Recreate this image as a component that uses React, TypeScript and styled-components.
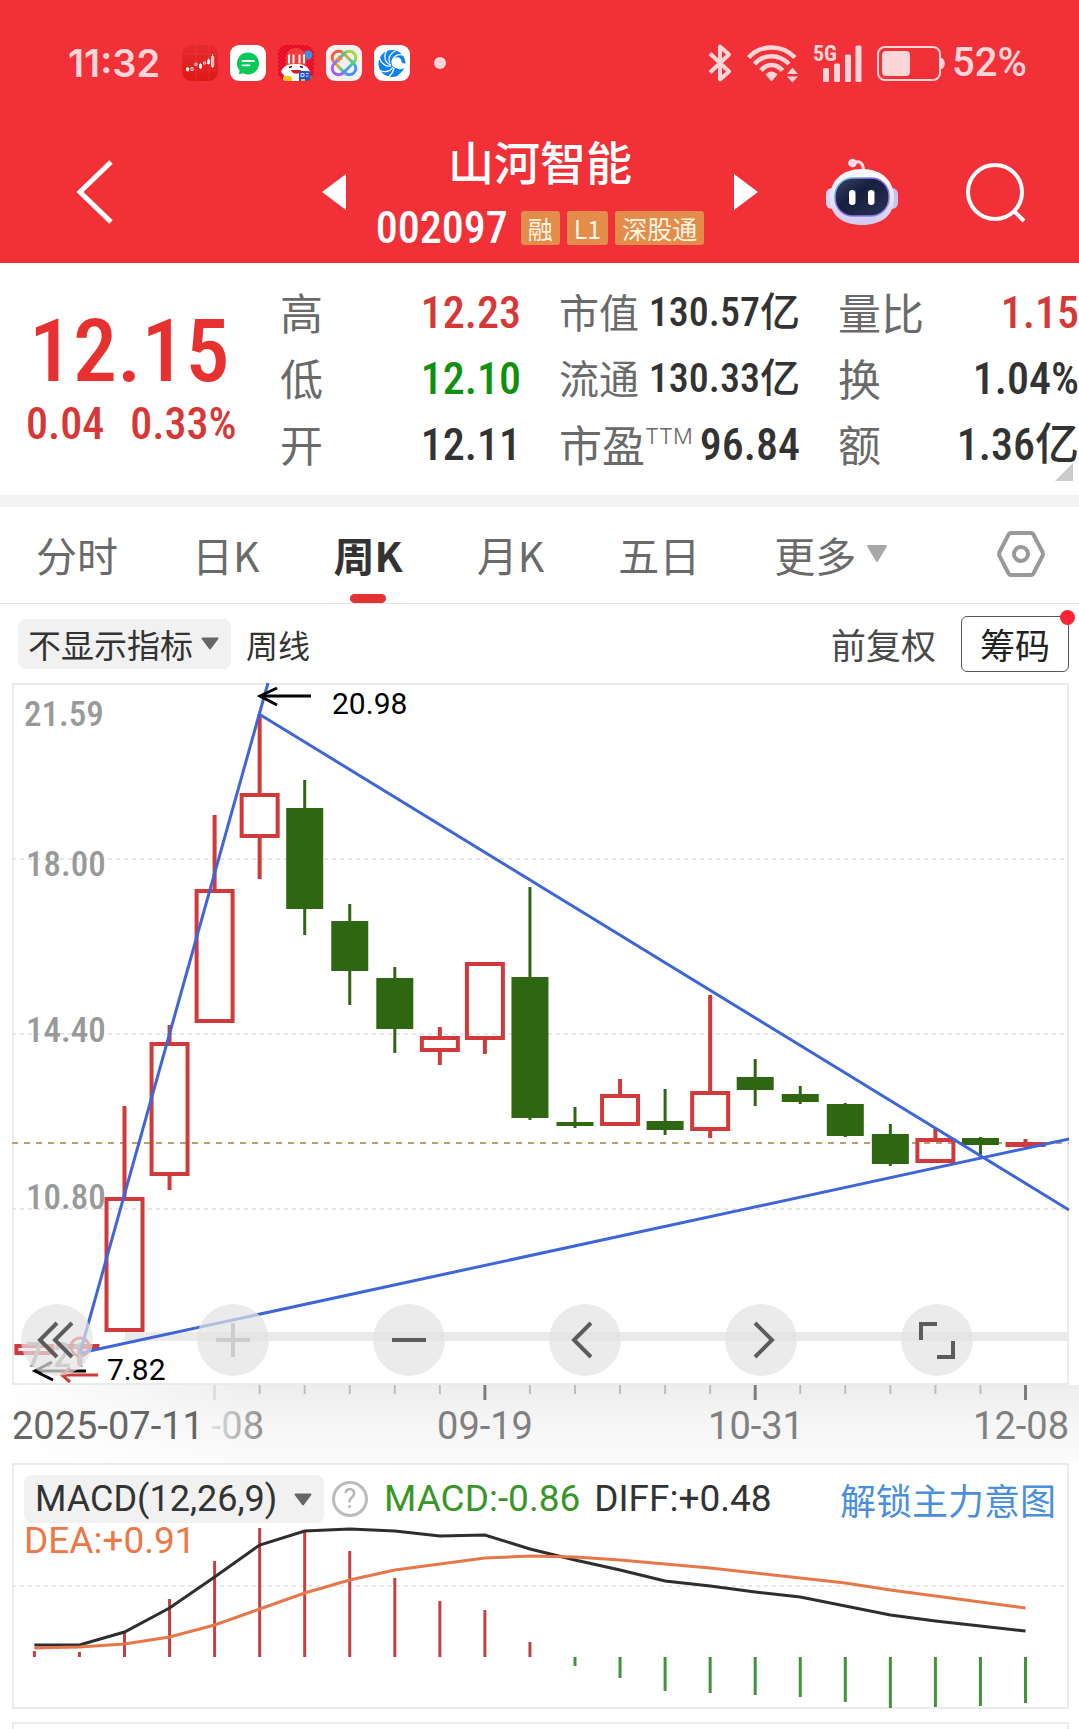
import React from "react";
import styled, { createGlobalStyle } from "styled-components";

const cjk = `"Noto Sans CJK SC", sans-serif`;
const condensed = `"Roboto Condensed", Roboto, ${cjk}`;
const latin = `Roboto, ${cjk}`;

const RED = "#d03a3a";
const GREEN = "#2f6612";
const BLUE = "#3f66d6";

const GlobalStyle = createGlobalStyle`
  * { box-sizing: border-box; }
  body { margin: 0; background: #fff; color: #333; font-family: ${cjk}; }
  button, select { font: inherit; color: inherit; border: 0; padding: 0; margin: 0; background: none; }
  svg { display: block; flex: none; overflow: visible; }
`;

const Page = styled.main`
  display: flex;
  flex-direction: column;
  overflow: hidden;
`;

/* ---------- status bar and title ---------- */

const Top = styled.header`
  background: #f13037;
  color: #fff;
`;

const StatusBar = styled.div`
  display: flex;
  align-items: center;
  justify-content: space-between;
  height: 126px;
  padding: 0 52px 0 68px;
  color: #ffd5d7;
`;

const StatusGroup = styled.div<{ $gap: number }>`
  display: flex;
  align-items: center;
  gap: ${(p) => p.$gap}px;
`;

const Clock = styled.time`
  font: 600 38px/40px Inter, sans-serif;
  margin-right: 10px;
`;

const Battery = styled.span`
  font: 500 40px/40px ${latin};
`;

const Dot = styled.span`
  width: 12px;
  height: 12px;
  margin-left: 12px;
  border-radius: 50%;
  background: currentColor;
`;

const TitleBar = styled.div`
  display: grid;
  grid-template-columns: 1fr auto 1fr;
  align-items: center;
  height: 137px;
  padding: 0 53px 6px 76px;
`;

const TitleCenter = styled.div`
  display: flex;
  align-items: center;
  gap: 30px;
  margin-right: 22px;
`;

const TitleBlock = styled.div`
  display: flex;
  flex-direction: column;
  align-items: center;
  gap: 20px;
`;

const StockName = styled.h1`
  margin: 0;
  font-size: 46px;
  font-weight: 500;
  line-height: 52px;
`;

const CodeRow = styled.div`
  display: flex;
  align-items: center;
  gap: 7px;
`;

const Code = styled.span`
  font: 500 44px/44px ${condensed};
  margin-right: 6px;
`;

const Tag = styled.span`
  height: 34px;
  padding: 0 7px;
  border-radius: 3px;
  background: #e48d4a;
  color: #fff6e2;
  font-size: 25px;
  line-height: 34px;
  white-space: nowrap;
`;

const IconButton = styled.button`
  display: flex;
  cursor: pointer;
`;

const TitleActions = styled.div`
  display: flex;
  align-items: center;
  justify-content: flex-end;
  gap: 68px;
`;

/* ---------- quote ---------- */

const Quote = styled.section`
  position: relative;
  display: grid;
  grid-template-columns: 240fr 799fr;
  column-gap: 14px;
  padding: 17px 0 17px 26px;
  border-bottom: 12px solid #f4f4f4;
`;

const PriceBlock = styled.div`
  display: flex;
  flex-direction: column;
  gap: 7px;
  padding-top: 27px;
  color: #e73131;
`;

const Price = styled.strong`
  padding-left: 3px;
  font: 500 88px/88px ${condensed};
`;

const Change = styled.div`
  display: flex;
  gap: 26px;
  color: #d63838;
  font: 500 44px/44px ${condensed};
`;

const Stats = styled.dl`
  display: grid;
  grid-template-columns: repeat(3, 1fr);
  grid-auto-rows: 66px;
  column-gap: 38px;
  margin: 0;
`;

const Stat = styled.div`
  display: flex;
  align-items: center;
  justify-content: space-between;
  white-space: nowrap;
`;

const StatLabel = styled.dt<{ $small?: boolean }>`
  display: flex;
  padding-bottom: 4px;
  color: #6a6a6a;
  font-size: ${(p) => (p.$small ? 40 : 43)}px;
  font-weight: 400;
  line-height: 44px;

  small {
    font: 300 22px/30px Inter, sans-serif;
  }
`;

const StatValue = styled.dd<{ $tone?: string; $small?: boolean }>`
  margin: 0;
  color: ${(p) => p.$tone ?? "#333"};
  font: 500 ${(p) => (p.$small ? 40 : 44)}px/44px ${condensed};
`;

const Corner = styled.svg`
  position: absolute;
  right: 6px;
  bottom: 14px;
`;

/* ---------- period tabs ---------- */

const Tabs = styled.nav`
  display: flex;
  align-items: stretch;
  gap: 74px;
  height: 97px;
  padding: 0 34px 2px 36px;
  border-bottom: 1px solid #e4e4e4;
`;

const Tab = styled.button<{ $active?: boolean }>`
  position: relative;
  display: flex;
  align-items: center;
  gap: 10px;
  color: ${(p) => (p.$active ? "#333" : "#6a6a6a")};
  font-size: 41px;
  font-weight: ${(p) => (p.$active ? 700 : 400)};
  line-height: 44px;
  white-space: nowrap;
  cursor: pointer;

  &::after {
    content: "";
    display: ${(p) => (p.$active ? "block" : "none")};
    position: absolute;
    left: calc(50% - 18px);
    bottom: -2px;
    width: 36px;
    height: 9px;
    border-radius: 5px;
    background: #e53232;
  }
`;

const SettingsButton = styled(IconButton)`
  align-items: center;
  margin-left: auto;
`;

/* ---------- chart toolbar ---------- */

const Toolbar = styled.div`
  display: flex;
  align-items: center;
  height: 79px;
  padding: 0 10px 0 18px;
`;

const Picker = styled.label<{ $height: number }>`
  position: relative;
  display: flex;
  align-items: center;
  height: ${(p) => p.$height}px;
  border-radius: 8px;
  background: #f1f1f1;

  svg {
    position: absolute;
    right: 12px;
    pointer-events: none;
  }
`;

const IndicatorSelect = styled.select`
  appearance: none;
  height: 100%;
  padding: 0 38px 0 10px;
  font-size: 33px;
  font-weight: 400;
`;

const MacdSelect = styled.select`
  appearance: none;
  height: 100%;
  padding: 0 46px 0 11px;
  font: 400 36px/44px ${latin};
`;

const PeriodName = styled.span`
  margin-left: 15px;
  font-size: 32px;
  line-height: 44px;
`;

const AdjustButton = styled.button`
  margin-left: auto;
  color: #4a4a4a;
  font-size: 35px;
  font-weight: 400;
  line-height: 44px;
  cursor: pointer;
`;

const ChipsButton = styled.button`
  position: relative;
  height: 56px;
  margin-left: 25px;
  padding: 0 18px;
  border: 1px solid #555;
  border-radius: 6px;
  color: #222;
  font-size: 35px;
  line-height: 44px;
  cursor: pointer;

  &::after {
    content: "";
    position: absolute;
    top: -7px;
    right: -7px;
    width: 15px;
    height: 15px;
    border-radius: 50%;
    background: #fd2436;
  }
`;

/* ---------- charts ---------- */

const Panel = styled.section`
  position: relative;
  margin: 0 10px 0 12px;
  border: 2px solid #ebebeb;
`;

const Plot = styled.svg`
  width: 100%;
  height: auto;
`;

const ScaleText = styled.text`
  fill: #999;
  font: 500 35px ${condensed};
`;

const MarkText = styled.text`
  fill: #000;
  font: 400 30px ${latin};
`;

const DateText = styled.text<{ $strong?: boolean }>`
  fill: ${(p) => (p.$strong ? "#666" : "#808080")};
  font: 400 38px ${latin};
`;

const FadedDateText = styled(DateText)`
  fill: url(#fadeDate);
`;

const Controls = styled.div`
  position: absolute;
  left: 7px;
  right: 94px;
  bottom: 7px;
  display: flex;
  justify-content: space-between;
`;

const RoundButton = styled.button`
  display: flex;
  align-items: center;
  justify-content: center;
  width: 72px;
  height: 72px;
  border-radius: 50%;
  background: rgba(227, 227, 227, 0.71);
  color: #5c5c5c;
  cursor: pointer;

  &:disabled {
    color: #ccc;
  }
`;

const Axis = styled.div`
  padding: 0 10px 0 12px;
  background: linear-gradient(90deg, #fff 0, rgba(255, 255, 255, 0) 24%),
    linear-gradient(#ededed 0, #f6f6f6 50%, #fbfbfb 100%);
`;

const MacdPanel = styled(Panel)`
  display: grid;

  > * {
    grid-area: 1 / 1;
  }
`;

const MacdHead = styled.div`
  z-index: 1;
  display: flex;
  flex-direction: column;
  padding: 10px 11px 0 10px;
  align-self: start;
`;

const MacdRow = styled.div`
  display: flex;
  align-items: center;
`;

const HelpButton = styled.button`
  width: 36px;
  height: 36px;
  margin: 0 16px 0 8px;
  border: 3px solid #bcbcbc;
  border-radius: 50%;
  color: #b4b4b4;
  font: 400 27px/30px ${latin};
  cursor: pointer;
`;

const Reading = styled.span<{ $tone: string }>`
  margin-right: 14px;
  color: ${(p) => p.$tone};
  font: 400 37px/36px ${latin};
`;

const UnlockLink = styled.a`
  margin-left: auto;
  color: #4a8fdc;
  font-size: 36px;
  line-height: 44px;
  text-decoration: none;
`;

const NextPanel = styled(Panel)`
  height: 7px;
  margin-top: 13px;
  border-bottom: 0;
`;

/* ---------- data ---------- */

const STEP = 45.05;
const xAt = (i: number) => 22.4 + STEP * i;

type Candle = { up: boolean; top: number; bottom: number; high: number; low: number };
const c = (up: boolean, high: number, top: number, bottom: number, low: number): Candle => ({ up, top, bottom, high, low });

const candles: Candle[] = [
  c(true, 661, 661, 672, 672),
  c(true, 661, 661, 665, 682),
  c(true, 423, 514, 649, 649),
  c(true, 342, 359, 493, 507),
  c(true, 132, 206, 340, 340),
  c(true, 31, 110, 155, 196),
  c(false, 97, 125, 226, 252),
  c(false, 221, 238, 288, 322),
  c(false, 284, 295, 346, 370),
  c(true, 344, 353, 369, 382),
  c(true, 279, 279, 357, 371),
  c(false, 204, 294, 435, 437),
  c(false, 424, 439, 443, 445),
  c(true, 396, 411, 443, 443),
  c(false, 406, 438, 447, 452),
  c(true, 312, 408, 448, 455),
  c(false, 376, 394, 407, 423),
  c(false, 403, 411, 419, 421),
  c(false, 420, 421, 453, 454),
  c(false, 441, 451, 481, 483),
  c(true, 446, 455, 480, 480),
  c(false, 454, 455, 462, 473),
  c(true, 456, 459, 463, 463),
];

const bars = [-6, -5, -24, -58, -96, -129, -125, -106, -79, -56, -47, -15, 9, 21, 34, 36, 38, 40, 45, 51, 50, 49, 46];
const diff = [182, 182, 169, 145, 114, 82, 68, 66, 68, 73, 72, 86, 97, 107, 118, 123, 129, 134, 143, 152, 158, 163, 168];
const dea = [185, 184, 181, 174, 162, 146, 130, 117, 107, 101, 95, 93, 94, 97, 101, 105, 110, 115, 120, 127, 133, 139, 145];

const points = (values: number[]) => values.map((y, i) => `${xAt(i)},${y}`).join(" ");

const stats = [
  { label: "高", value: "12.23", tone: "#d63838" },
  { label: "市值", value: "130.57亿", small: true },
  { label: "量比", value: "1.15", tone: "#d63838" },
  { label: "低", value: "12.10", tone: "#0f910f" },
  { label: "流通", value: "130.33亿", small: true },
  { label: "换", value: "1.04%" },
  { label: "开", value: "12.11" },
  { label: "市盈", note: "TTM", value: "96.84" },
  { label: "额", value: "1.36亿" },
];

/* ---------- drawings ---------- */

const CandleAppIcon = () => (
  <svg width="36" height="36" viewBox="0 0 36 36">
    <defs>
      <linearGradient id="appRed" x1="0" y1="0" x2="0" y2="1">
        <stop offset="0" stopColor="#e62a31" />
        <stop offset="1" stopColor="#de1815" />
      </linearGradient>
    </defs>
    <rect width="36" height="36" rx="9" fill="url(#appRed)" />
    <path d="M14 0v36M27 0v36M0 9h36M0 25h36" stroke="#f0555a" strokeWidth=".5" opacity=".6" />
    <g stroke="#fff" strokeWidth=".8">
      <path d="M4.500 23h2.200v2.600H4.500zM5.600 22v4.500M17.500 19.500h2v3.500h-2zM18.500 18v6M25.500 15h2v3.500h-2zM26.500 13.500v6" fill="#fff" />
      <path d="M9 22.500h2v3H9zM13 18h2v2.500h-2zM21.500 17h2v2h-2zM29.500 11.500h2.200v10h-2.200zM30.600 9v14" fill="none" />
    </g>
  </svg>
);

const ChatAppIcon = () => (
  <svg width="36" height="36" viewBox="0 0 36 36">
    <rect width="36" height="36" rx="9" fill="#fff" />
    <path d="M18 7.500a11 11 0 1 1-5 20.800c-1.500.7-3 .9-4.500.7.800-1 1.200-2 1.100-3.300A11 11 0 0 1 18 7.500z" fill="#07c957" />
    <path d="M12.500 16h11.500M12.500 20.300h7" stroke="#fff" strokeWidth="1.800" strokeLinecap="round" />
  </svg>
);

const FestivalAppIcon = () => (
  <svg width="36" height="36" viewBox="0 0 36 36">
    <defs>
      <clipPath id="festClip"><rect width="36" height="36" rx="9" /></clipPath>
      <pattern id="festGrid" width="4" height="4" patternUnits="userSpaceOnUse">
        <path d="M0 0h2v2H0zM2 2h2v2H2z" fill="#d5122c" />
      </pattern>
    </defs>
    <g clipPath="url(#festClip)">
      <rect width="36" height="36" fill="#fb1228" />
      <rect width="36" height="36" fill="url(#festGrid)" />
      <circle cx="30" cy="10" r="4.500" fill="#3f8ee0" />
      <path d="M8 20C6 9 11 3 18 3s12 6 10 17z" fill="#f23c3a" />
      <path d="M11 9.500v9M15.500 9.500v9M21.500 9.500v9M26 9.500v9" stroke="#fff" strokeWidth="2" />
      <path d="M3 27c3-8 9-8 15-8s12 1 14 8l-5 2v7H6v-6z" fill="#fff" />
      <path d="M11 22.500l3-1M25 22.500l-3-1" stroke="#222" strokeWidth="1.500" />
      <path d="M13 25h10c0 5-9 5-10 0z" fill="#c22" />
      <rect x="5" y="31" width="9" height="6" rx="2" fill="#f9c514" />
      <rect x="21" y="26" width="11" height="11" rx="1.500" fill="#1d56cf" />
      <path d="M23 28.500h3v3h-3zM28 28.500h2.500M28 31h2.500" stroke="#cfe0ff" fill="none" />
      <rect x="23" y="34" width="4" height="3" fill="#f7b733" />
      <circle cx="34" cy="33" r="2" fill="#44b449" />
    </g>
  </svg>
);

const OrbitAppIcon = () => (
  <svg width="36" height="36" viewBox="0 0 36 36">
    <defs>
      <linearGradient id="orbit" gradientUnits="userSpaceOnUse" x1="6" y1="18" x2="30" y2="18">
        <stop offset="0" stopColor="#ff5a3c" />
        <stop offset=".35" stopColor="#f3a536" />
        <stop offset=".7" stopColor="#3fcf9a" />
        <stop offset="1" stopColor="#4a90ff" />
      </linearGradient>
      <linearGradient id="orbitBack" gradientUnits="userSpaceOnUse" x1="6" y1="18" x2="30" y2="18">
        <stop offset="0" stopColor="#a85bf0" />
        <stop offset=".45" stopColor="#4ca0f4" />
        <stop offset=".8" stopColor="#4fd070" />
        <stop offset="1" stopColor="#a8d83c" />
      </linearGradient>
    </defs>
    <rect width="36" height="36" rx="9" fill="#f2f2f3" />
    <g fill="none" strokeWidth="3">
      <rect x="4" y="11.500" width="28" height="13" rx="6.500" transform="rotate(45 18 18)" stroke="url(#orbit)" />
      <rect x="4" y="11.500" width="28" height="13" rx="6.500" transform="rotate(-45 18 18)" stroke="url(#orbitBack)" />
    </g>
    <path d="M13 9.500l1.200 3.300L17.500 14l-3.300 1.200L13 18.500l-1.200-3.300L8.500 14l3.300-1.200z" fill="#f6813a" />
  </svg>
);

const SwirlAppIcon = () => (
  <svg width="36" height="36" viewBox="0 0 36 36">
    <rect width="36" height="36" rx="9" fill="#fff" />
    <circle cx="18" cy="18.500" r="13.500" fill="#0e82f4" />
    <path d="M20 13c4-2 8 0 7.500 4.500L32 19l-1 7-8 6c4-4 3-8-1-9-5-1-6-7-2-10z" fill="#fff" />
    <path d="M20.500 22.500c3 2.500 7 2 10 .5-2 4-6 7-10 8 1.500-2 1.500-5 0-8.500z" fill="#0e82f4" />
    <g fill="none" stroke="#fff" strokeWidth="1.300">
      <path d="M18 17C19 10.500 25 8 31 11" />
      <path d="M16 18C13 13 17 7 24 5" />
      <path d="M17 20C11 18 9 12 13 5" />
      <path d="M17 21C11 22 7 18 5 12" />
      <path d="M19 22C16 27 10 28 5 25" />
      <path d="M20 23C19 28 17 30 14 32" />
    </g>
  </svg>
);

const Bluetooth = () => (
  <svg width="24" height="38" viewBox="0 0 24 38">
    <path d="M2 9.500L21 27.500 12 35.500V2.500l9 8L2 28.500" fill="none" stroke="#ffd5d7" strokeWidth="4" strokeLinejoin="round" />
  </svg>
);

const Wifi = () => (
  <svg width="51" height="37" viewBox="0 0 51 37">
    <g fill="none" stroke="#ffd5d7" strokeWidth="4.500">
      <path d="M1.500 12.500C14-1 35-1 48 12.500" />
      <path d="M7.500 19C17 8.500 32 8.500 42 19" />
      <path d="M14 25.500c6-7.500 15-7.500 21.500 0" />
    </g>
    <path d="M18.500 29.500c4-4 8-4 12 0l-6 7z" fill="#ffd5d7" />
    <path d="M40 29l5.500-6.500L51 29zM40 31.500l5.500 6L51 31.500z" fill="#ffd5d7" />
  </svg>
);

const NetLabel = styled.text`
  fill: #ffd5d7;
  font: 700 22px ${condensed};
`;

const Signal = () => (
  <svg width="49" height="37" viewBox="0 0 49 37">
    <NetLabel x="0" y="16">5G</NetLabel>
    <g fill="#ffd5d7">
      <rect x="10" y="23" width="6" height="14" rx="1.500" />
      <rect x="21" y="18.500" width="6" height="18.500" rx="1.500" />
      <rect x="32" y="9.500" width="6" height="27.500" rx="1.500" />
      <rect x="42.500" y="0.500" width="6" height="36.500" rx="1.500" />
    </g>
  </svg>
);

const BatteryIcon = () => (
  <svg width="68" height="35" viewBox="0 0 68 35">
    <rect x="1" y="1" width="62" height="33" rx="7" fill="none" stroke="#ffd5d7" strokeWidth="2" />
    <rect x="5" y="5" width="28" height="25" rx="4" fill="#ffd5d7" />
    <path d="M64 12c5 0 5 11 0 11z" fill="#ffd5d7" />
  </svg>
);

const Robot = () => (
  <svg width="72" height="68" viewBox="0 0 72 68">
    <defs>
      <linearGradient id="shell" x1="0" y1="0" x2="0" y2="1">
        <stop offset="0" stopColor="#fff" />
        <stop offset=".6" stopColor="#e3e0f8" />
        <stop offset="1" stopColor="#cfc9ef" />
      </linearGradient>
      <linearGradient id="visor" x1="0" y1="0" x2="1" y2="1">
        <stop offset="0" stopColor="#3a4668" />
        <stop offset=".4" stopColor="#161f3f" />
        <stop offset="1" stopColor="#2b3152" />
      </linearGradient>
      <linearGradient id="rim" x1="0" y1="0" x2="1" y2="1">
        <stop offset="0" stopColor="#78cdf4" />
        <stop offset=".5" stopColor="#8b5be8" />
        <stop offset="1" stopColor="#7c9cf0" />
      </linearGradient>
    </defs>
    <path d="M27 5c7-3 10 0 10.500 7" fill="none" stroke="#ffd9e2" strokeWidth="3" />
    <circle cx="26.500" cy="5" r="4.300" fill="#fbdfe8" />
    <rect x="0" y="30" width="12" height="21" rx="6" fill="#d9d6f4" />
    <rect x="60" y="30" width="12" height="21" rx="6" fill="#c6c4ee" />
    <path d="M36 11c20 0 32 12 32 29 0 18-13 27-32 27S4 58 4 40c0-17 12-29 32-29z" fill="url(#shell)" />
    <rect x="9" y="20" width="54" height="38" rx="18" fill="url(#visor)" stroke="url(#rim)" strokeWidth="1.500" />
    <rect x="23" y="32" width="6.500" height="15" rx="3.200" fill="#fff" />
    <rect x="42" y="32" width="6.500" height="15" rx="3.200" fill="#fff" />
  </svg>
);

const LargeDown = () => (
  <svg width="22" height="20" viewBox="0 0 22 20">
    <path d="M2 2h18l-9 15z" fill="#a8a8a8" stroke="#a8a8a8" strokeWidth="2" strokeLinejoin="round" />
  </svg>
);

const SmallDown = () => (
  <svg width="18" height="13" viewBox="0 0 18 13">
    <path d="M1.500 1.500h15L9 11.500z" fill="#666" stroke="#666" strokeWidth="2" strokeLinejoin="round" />
  </svg>
);

const glyph = { fill: "none", stroke: "currentColor", strokeWidth: 4 };

const RewindGlyph = () => (
  <svg width="36" height="38" viewBox="0 0 36 38"><path d="M18 2L1 19l17 17M33 2L16 19l17 17" {...glyph} /></svg>
);
const PlusGlyph = () => (
  <svg width="34" height="34" viewBox="0 0 34 34"><path d="M0 17h34M17 0v34" {...glyph} /></svg>
);
const MinusGlyph = () => (
  <svg width="34" height="34" viewBox="0 0 34 34"><path d="M0 17h34" {...glyph} /></svg>
);
const LeftGlyph = () => (
  <svg width="28" height="38" viewBox="0 0 28 38"><path d="M20 2L3 19l17 17" {...glyph} /></svg>
);
const RightGlyph = () => (
  <svg width="28" height="38" viewBox="0 0 28 38"><path d="M8 2l17 17L8 36" {...glyph} /></svg>
);
const ExpandGlyph = () => (
  <svg width="38" height="38" viewBox="0 0 38 38"><path d="M3 19V3h16M35 20v16H19" {...glyph} /></svg>
);

/* ---------- chart pieces ---------- */

const CandleMark = ({ x, d }: { x: number; d: Candle }) => {
  const color = d.up ? RED : GREEN;
  return (
    <g stroke={color} strokeWidth={d.up ? 4 : 3}>
      {d.high < d.top && <path d={`M${x} ${d.high}V${d.top}`} />}
      {d.low > d.bottom && <path d={`M${x} ${d.bottom}V${d.low}`} />}
      {d.up ? (
        <rect x={x - 18} y={d.top + 2} width="36" height={Math.max(1, d.bottom - d.top - 4)} fill="none" />
      ) : (
        <rect x={x - 18.5} y={d.top} width="37" height={d.bottom - d.top} fill={color} stroke="none" />
      )}
    </g>
  );
};

const PriceChart = () => (
  <Plot viewBox="2 2 1053 698" role="img" aria-label="周K">
    {[176, 351, 526].map((y) => (
      <path key={y} d={`M0 ${y}H1057`} stroke="#dedede" strokeWidth="1.500" strokeDasharray="4 4" />
    ))}
    <path d="M0 460H1057" stroke="#bf9f72" strokeWidth="2" strokeDasharray="6 6" />
    <ScaleText x="12" y="43">21.59</ScaleText>
    <ScaleText x="14" y="193">18.00</ScaleText>
    <ScaleText x="14" y="359">14.40</ScaleText>
    <ScaleText x="14" y="526">10.80</ScaleText>
    <rect x="113" y="649" width="944" height="9" fill="#ebebeb" />
    {candles.map((d, i) => (
      <CandleMark key={i} x={xAt(i)} d={d} />
    ))}
    <circle cx="68" cy="664" r="9" fill="none" stroke={RED} strokeWidth="3" />
    <ScaleText x="14" y="684">7.21</ScaleText>
    <g stroke={BLUE} strokeWidth="3" fill="none">
      <path d="M68 670L256 0" />
      <path d="M247 31L1057 527" />
      <path d="M68 670L1057 456" />
    </g>
    <g fill="none" strokeWidth="3">
      <path d="M299 13H248M265 5L248 13l17 9" stroke="#000" />
      <path d="M74 688H23M40 679L23 688l18 9" stroke="#000" />
      <path d="M86 692H50M58 685L50 692l8 7" stroke={RED} />
    </g>
    <MarkText x="320" y="31">20.98</MarkText>
    <MarkText x="95" y="697">7.82</MarkText>
  </Plot>
);

const DateAxis = () => (
  <Plot viewBox="0 0 1057 78" role="img" aria-label="日期">
    <defs>
      <linearGradient id="fadeDate" x1="0" x2="1">
        <stop offset="0" stopColor="#e4e4e4" />
        <stop offset="1" stopColor="#8c8c8c" />
      </linearGradient>
    </defs>
    {candles.map((_, i) => {
      if (i < 4) return null;
      const major = (i - 4) % 6 === 0;
      return (
        <path
          key={i}
          d={`M${xAt(i)} 0V${major ? 15 : 9}`}
          stroke={i === 4 ? "#ddd" : major ? "#7d7d7d" : "#bdbdbd"}
          strokeWidth={major ? 3 : 2}
        />
      );
    })}
    <DateText x="0" y="54" $strong>2025-07-11</DateText>
    <FadedDateText x="252" y="54" textAnchor="end">-08</FadedDateText>
    <DateText x="473" y="54" textAnchor="middle">09-19</DateText>
    <DateText x="744" y="54" textAnchor="middle">10-31</DateText>
    <DateText x="1057" y="54" textAnchor="end">12-08</DateText>
  </Plot>
);

const MacdChart = () => (
  <Plot viewBox="2 2 1053 242" role="img" aria-label="MACD">
    <path d="M0 123H1057" stroke="#e8e8e8" strokeWidth="2" strokeDasharray="4 4" />
    {bars.map((h, i) => (
      <path key={i} d={`M${xAt(i)} 194v${h}`} stroke={h < 0 ? "#c54141" : "#43933a"} strokeWidth="3" />
    ))}
    <polyline points={points(diff)} fill="none" stroke="#2e2e2e" strokeWidth="3" />
    <polyline points={points(dea)} fill="none" stroke="#e67749" strokeWidth="3" />
  </Plot>
);

export default function App() {
  return (
    <Page>
      <GlobalStyle />
      <Top>
        <StatusBar>
          <StatusGroup $gap={12}>
            <Clock>11:32</Clock>
            <CandleAppIcon />
            <ChatAppIcon />
            <FestivalAppIcon />
            <OrbitAppIcon />
            <SwirlAppIcon />
            <Dot />
          </StatusGroup>
          <StatusGroup $gap={15}>
            <Bluetooth />
            <Wifi />
            <Signal />
            <StatusGroup $gap={7}>
              <BatteryIcon />
              <Battery>52%</Battery>
            </StatusGroup>
          </StatusGroup>
        </StatusBar>
        <TitleBar>
          <IconButton aria-label="返回">
            <svg width="38" height="64" viewBox="0 0 38 64">
              <path d="M35 2L4 32l31 30" fill="none" stroke="#fff" strokeWidth="5" />
            </svg>
          </IconButton>
          <TitleCenter>
            <IconButton aria-label="上一只">
              <svg width="24" height="36" viewBox="0 0 24 36"><path d="M24 0v36L0 18z" fill="#fff" /></svg>
            </IconButton>
            <TitleBlock>
              <StockName>山河智能</StockName>
              <CodeRow>
                <Code>002097</Code>
                <Tag>融</Tag>
                <Tag>L1</Tag>
                <Tag>深股通</Tag>
              </CodeRow>
            </TitleBlock>
            <IconButton aria-label="下一只">
              <svg width="24" height="36" viewBox="0 0 24 36"><path d="M0 0v36l24-18z" fill="#fff" /></svg>
            </IconButton>
          </TitleCenter>
          <TitleActions>
            <IconButton aria-label="智能助手"><Robot /></IconButton>
            <IconButton aria-label="搜索">
              <svg width="60" height="60" viewBox="0 0 60 60">
                <circle cx="29" cy="30" r="27" fill="none" stroke="#fff" strokeWidth="4" />
                <path d="M47 48l11 11" stroke="#fff" strokeWidth="4" />
              </svg>
            </IconButton>
          </TitleActions>
        </TitleBar>
      </Top>

      <Quote>
        <PriceBlock>
          <Price>12.15</Price>
          <Change>
            <span>0.04</span>
            <span>0.33%</span>
          </Change>
        </PriceBlock>
        <Stats>
          {stats.map((s) => (
            <Stat key={s.label}>
              <StatLabel $small={s.small}>
                {s.label}
                {s.note && <small>{s.note}</small>}
              </StatLabel>
              <StatValue $tone={s.tone} $small={s.small}>{s.value}</StatValue>
            </Stat>
          ))}
        </Stats>
        <Corner width="18" height="18" viewBox="0 0 18 18"><path d="M18 0v18H0z" fill="#ccc" /></Corner>
      </Quote>

      <Tabs>
        <Tab>分时</Tab>
        <Tab>日K</Tab>
        <Tab $active>周K</Tab>
        <Tab>月K</Tab>
        <Tab>五日</Tab>
        <Tab>更多<LargeDown /></Tab>
        <SettingsButton aria-label="设置">
          <svg width="48" height="46" viewBox="0 0 48 46">
            <path d="M14 2h20q1.500 0 2.300 1.300L45.500 21q.8 2 0 4L36.300 42.700Q35.500 44 34 44H14q-1.500 0-2.300-1.300L2.500 25q-.8-2 0-4L11.700 3.300Q12.500 2 14 2z" fill="none" stroke="#999" strokeWidth="4" />
            <circle cx="24" cy="23" r="7" fill="none" stroke="#999" strokeWidth="4" />
          </svg>
        </SettingsButton>
      </Tabs>

      <Toolbar>
        <Picker $height={50}>
          <IndicatorSelect aria-label="指标">
            <option>不显示指标</option>
          </IndicatorSelect>
          <SmallDown />
        </Picker>
        <PeriodName>周线</PeriodName>
        <AdjustButton>前复权</AdjustButton>
        <ChipsButton>筹码</ChipsButton>
      </Toolbar>

      <Panel>
        <PriceChart />
        <Controls>
          <RoundButton aria-label="最早"><RewindGlyph /></RoundButton>
          <RoundButton aria-label="放大" disabled><PlusGlyph /></RoundButton>
          <RoundButton aria-label="缩小"><MinusGlyph /></RoundButton>
          <RoundButton aria-label="左移"><LeftGlyph /></RoundButton>
          <RoundButton aria-label="右移"><RightGlyph /></RoundButton>
          <RoundButton aria-label="全屏"><ExpandGlyph /></RoundButton>
        </Controls>
      </Panel>
      <Axis>
        <DateAxis />
      </Axis>

      <MacdPanel>
        <MacdChart />
        <MacdHead>
          <MacdRow>
            <Picker $height={48}>
              <MacdSelect aria-label="副图指标">
                <option>MACD(12,26,9)</option>
              </MacdSelect>
              <SmallDown />
            </Picker>
            <HelpButton aria-label="说明">?</HelpButton>
            <Reading $tone="#3a9628">MACD:-0.86</Reading>
            <Reading $tone="#333">DIFF:+0.48</Reading>
            <UnlockLink href="#unlock">解锁主力意图</UnlockLink>
          </MacdRow>
          <Reading $tone="#ec7747">DEA:+0.91</Reading>
        </MacdHead>
      </MacdPanel>
      <NextPanel />
    </Page>
  );
}
